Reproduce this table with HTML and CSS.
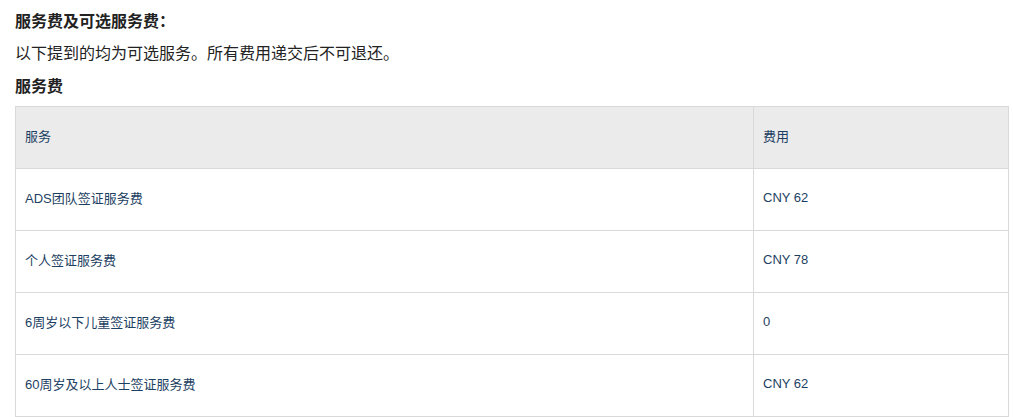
FILE: index.html
```html
<!DOCTYPE html>
<html lang="zh-CN">
<head>
<meta charset="utf-8">
<link rel="stylesheet" href="styles.css">
</head>
<body>
<div class="page">
  <h3 class="title">服务费及可选服务费：</h3>
  <p class="note">以下提到的均为可选服务。所有费用递交后不可退还。</p>
  <h3 class="subtitle">服务费</h3>
  <table class="fees">
    <thead>
      <tr><th class="col-service">服务</th><th class="col-fee">费用</th></tr>
    </thead>
    <tbody>
      <tr><td>ADS团队签证服务费</td><td>CNY 62</td></tr>
      <tr><td>个人签证服务费</td><td>CNY 78</td></tr>
      <tr><td>6周岁以下儿童签证服务费</td><td>0</td></tr>
      <tr><td>60周岁及以上人士签证服务费</td><td>CNY 62</td></tr>
    </tbody>
  </table>
</div>
</body>
</html>
```
FILE: styles.css
```css
html, body {
  margin: 0;
  padding: 0;
  background: #fff;
}
.page {
  padding: 12px 4px 0 15px;
  font-family: "Liberation Sans", "Noto Sans CJK SC", sans-serif;
  color: #222;
}
.title, .subtitle {
  margin: 0;
  font-size: 16px;
  font-weight: bold;
  line-height: 20px;
}
.note {
  margin: 12px 0 0;
  font-size: 16px;
  line-height: 20px;
}
.subtitle {
  margin-top: 13px;
}
.fees {
  margin-top: 9px;
  width: 994px;
  border-collapse: collapse;
  font-size: 13px;
  color: #1d3f63;
}
.fees th, .fees td {
  border: 1px solid #d9d9d9;
  height: 57px;
  padding: 0 9px 4px;
  text-align: left;
  font-weight: normal;
  vertical-align: middle;
}
.fees thead th {
  background: #ebebeb;
}
.col-service {
  width: 719px;
}
```
